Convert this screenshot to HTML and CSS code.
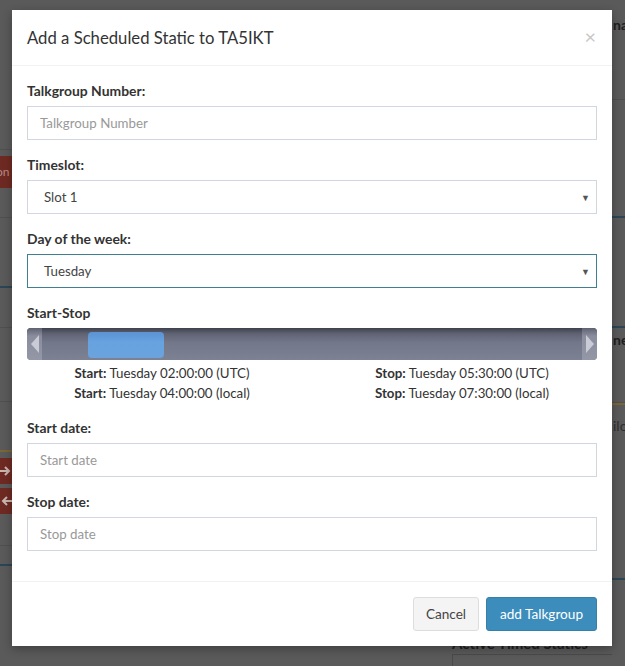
FILE: index.html
```html
<!DOCTYPE html>
<html>
<head>
<meta charset="utf-8">
<title>Add a Scheduled Static</title>
<link rel="stylesheet" href="styles.css">
</head>
<body>
<div class="page">
  <div class="side side-left">
    <div class="row r1"></div>
    <div class="row r2"><span class="redbtn">on</span></div>
    <div class="row r3 line-blue"></div>
    <div class="row r4"></div>
    <div class="row r5"></div>
    <div class="row r6 line-yellow"></div>
    <div class="row r7"><span class="redbtn arrow"><svg width="12" height="26" viewBox="0 0 12 26"><path d="M0 13 H9 M5 9 L9 13 L5 17" stroke="#c9b4b0" stroke-width="2" fill="none"/></svg></span></div>
    <div class="row r8"><span class="redbtn arrow"><svg width="12" height="26" viewBox="0 0 12 26"><path d="M12 13 H3 M7 9 L3 13 L7 17" stroke="#c9b4b0" stroke-width="2" fill="none"/></svg></span></div>
    <div class="row r9 line-blue"></div>
    <div class="row r10"></div>
  </div>
  <div class="center-gap">
    <div class="under-title">Active Timed Statics</div>
    <div class="under-box"></div>
  </div>
  <div class="side side-right">
    <div class="row q1"><span class="bgtext bold">na</span></div>
    <div class="row q2 line-blue"></div>
    <div class="row q3 line-blue"></div>
    <div class="row q4"><span class="bgtext bold">nec</span></div>
    <div class="row q5 line-yellow"></div>
    <div class="row q5b line-blue"><span class="bgtext">ilot</span></div>
    <div class="row q6"></div>
  </div>
</div>

<div class="modal">
  <div class="modal-header">
    <h4 class="modal-title">Add a Scheduled Static to TA5IKT</h4>
    <span class="close">&times;</span>
  </div>
  <div class="modal-body">
    <div class="form-group">
      <label class="lbl">Talkgroup Number:</label>
      <input class="form-control" type="text" placeholder="Talkgroup Number">
    </div>
    <div class="form-group">
      <label class="lbl">Timeslot:</label>
      <div class="select"><span>Slot 1</span><span class="caret">&#9660;</span></div>
    </div>
    <div class="form-group">
      <label class="lbl">Day of the week:</label>
      <div class="select focus"><span>Tuesday</span><span class="caret">&#9660;</span></div>
    </div>
    <div class="form-group">
      <label class="lbl">Start-Stop</label>
      <div class="slider">
        <div class="arr arr-left"><svg width="8" height="18" viewBox="0 0 8 18"><path d="M8 0 L0 9 L8 18 Z" fill="#c9ccd6"/></svg></div>
        <div class="track">
          <div class="pad-left"></div>
          <div class="handle"></div>
        </div>
        <div class="arr arr-right"><svg width="8" height="18" viewBox="0 0 8 18"><path d="M0 0 L8 9 L0 18 Z" fill="#c9ccd6"/></svg></div>
      </div>
      <div class="times">
        <div class="tcol">
          <div><b>Start:</b> Tuesday 02:00:00 (UTC)</div>
          <div><b>Start:</b> Tuesday 04:00:00 (local)</div>
        </div>
        <div class="tcol">
          <div><b>Stop:</b> Tuesday 05:30:00 (UTC)</div>
          <div><b>Stop:</b> Tuesday 07:30:00 (local)</div>
        </div>
      </div>
    </div>
    <div class="form-group">
      <label class="lbl">Start date:</label>
      <input class="form-control" type="text" placeholder="Start date">
    </div>
    <div class="form-group">
      <label class="lbl">Stop date:</label>
      <input class="form-control" type="text" placeholder="Stop date">
    </div>
  </div>
  <div class="modal-footer">
    <button class="btn btn-default">Cancel</button>
    <button class="btn btn-primary">add Talkgroup</button>
  </div>
</div>
</body>
</html>
```
FILE: styles.css
```css
* { box-sizing: border-box; }
html, body { margin: 0; padding: 0; }
body {
  width: 625px;
  height: 666px;
  overflow: hidden;
  background: #5a5a5a;
  font-family: Lato, "Liberation Sans", sans-serif;
  font-size: 13.3px;
  color: #333;
  position: relative;
}

.page {
  display: flex;
  height: 666px;
}
.side { display: flex; flex-direction: column; }
.side-left { width: 12px; }
.side-right { width: 13px; overflow: hidden; }
.center-gap {
  flex: 1;
  display: flex;
  flex-direction: column;
  justify-content: flex-end;
  align-items: flex-end;
}
.row { border-bottom: 1px solid #505050; }
.line-blue { border-bottom: 2px solid #2a4656; }
.line-yellow { border-bottom: 2px solid #7a6636; }
.r1 { height: 150px; }
.r2 { height: 68px; padding-top: 6px; }
.r3 { height: 70px; }
.r4 { height: 40px; }
.r5 { height: 74px; }
.r6 { height: 50px; }
.r7 { height: 34px; padding-top: 6px; border: none; }
.r8 { height: 60px; padding-top: 2px; }
.r9 { height: 20px; }
.r10 { flex: 1; border: none; }
.redbtn {
  display: block;
  width: 12px;
  height: 32px;
  background: #6e2a22;
  color: #b98a84;
  font-size: 12px;
  line-height: 32px;
  overflow: hidden;
  text-indent: -4px;
}
.redbtn.arrow { height: 26px; text-indent: 0; }
.redbtn svg { display: block; }
.q1 { height: 100px; padding-top: 16px; }
.q2 { height: 118px; }
.q3 { height: 110px; }
.q4 { height: 75px; padding-top: 3px; }
.q5 { height: 0; border-bottom-width: 2px; }
.q5b { height: 175px; padding-top: 12px; }
.q6 { flex: 1; border: none; }
.bgtext {
  display: block;
  color: #1e1e1e;
  font-size: 14px;
  white-space: nowrap;
  margin-left: 1px;
}
.q5b .bgtext { color: #2e2e2e; }
.bold { font-weight: 700; }
.under-title {
  width: 160px;
  color: #1e1e1e;
  font-weight: 700;
  font-size: 15px;
}
.under-box {
  width: 160px;
  height: 12px;
  border-top: 1px solid #4a4a4a;
  border-left: 1px solid #4a4a4a;
  margin-top: 2px;
}

/* modal */
.modal {
  position: absolute;
  left: 12px;
  top: 10px;
  width: 600px;
  background: #fff;
  box-shadow: 0 3px 9px rgba(0,0,0,.3);
}
.modal-header {
  display: flex;
  justify-content: space-between;
  align-items: center;
  padding: 15px;
  border-bottom: 1px solid #f2f2f2;
  height: 56px;
}
.modal-title {
  margin: 0;
  font-size: 16.7px;
  font-weight: 400;
  color: #333;
  line-height: 26px;
}
.close {
  font-size: 20px;
  color: #c8c8c8;
  line-height: 20px;
  margin-right: 1px;
  margin-top: -4px;
}
.modal-body { padding: 15px 15px 15px; }
.form-group { margin-bottom: 15px; }
.lbl {
  display: block;
  font-weight: 700;
  font-size: 13.9px;
  line-height: 20px;
  margin-bottom: 5px;
  color: #333;
}
.form-control {
  display: block;
  width: 100%;
  height: 34px;
  padding: 6px 12px;
  border: 1px solid #d2d6de;
  font-family: inherit;
  font-size: 13.3px;
  color: #555;
  outline: none;
}
.form-control::placeholder { color: #999; }
.select {
  display: flex;
  align-items: center;
  justify-content: space-between;
  height: 34px;
  padding: 0 6px 0 16px;
  border: 1px solid #d2d6de;
  color: #444;
}
.select.focus { border-color: #3f8090; }
.caret { font-size: 9px; color: #555; }

/* range slider */
.slider {
  display: flex;
  height: 32px;
  border-radius: 4px;
  overflow: hidden;
  background: linear-gradient(#3e424e 0%, #5f6373 18%, #73778a 45%, #7d8194 100%);
}
.arr {
  width: 15px;
  display: flex;
  align-items: center;
  justify-content: center;
  background: linear-gradient(#5f6371 0%, #8a8d9b 25%, #9497a6 100%);
}
.track {
  flex: 1;
  display: flex;
  align-items: center;
}
.pad-left { width: 46px; }
.handle {
  width: 76px;
  height: 26px;
  margin-top: 1px;
  border-radius: 4px;
  background: linear-gradient(#5b93d3, #68a2df 40%, #6aa3dd);
}
.times {
  display: grid;
  grid-template-columns: 1fr 1fr;
  margin: 3px -15px 0;
}
.tcol {
  text-align: center;
  line-height: 20px;
  color: #333;
}
.tcol b { font-weight: 700; }

.modal-footer {
  display: flex;
  justify-content: flex-end;
  gap: 7px;
  padding: 15px;
  border-top: 1px solid #f2f2f2;
}
.btn {
  height: 34px;
  padding: 6px 0;
  font-family: inherit;
  font-size: 13.6px;
  border-radius: 3px;
  border: 1px solid transparent;
  white-space: nowrap;
  text-align: center;
}
.btn-default {
  background: #f4f4f4;
  border-color: #ddd;
  color: #444;
  width: 66px;
}
.btn-primary {
  background: #3c8dbc;
  border-color: #367fa9;
  color: #fff;
  width: 111px;
}
```
